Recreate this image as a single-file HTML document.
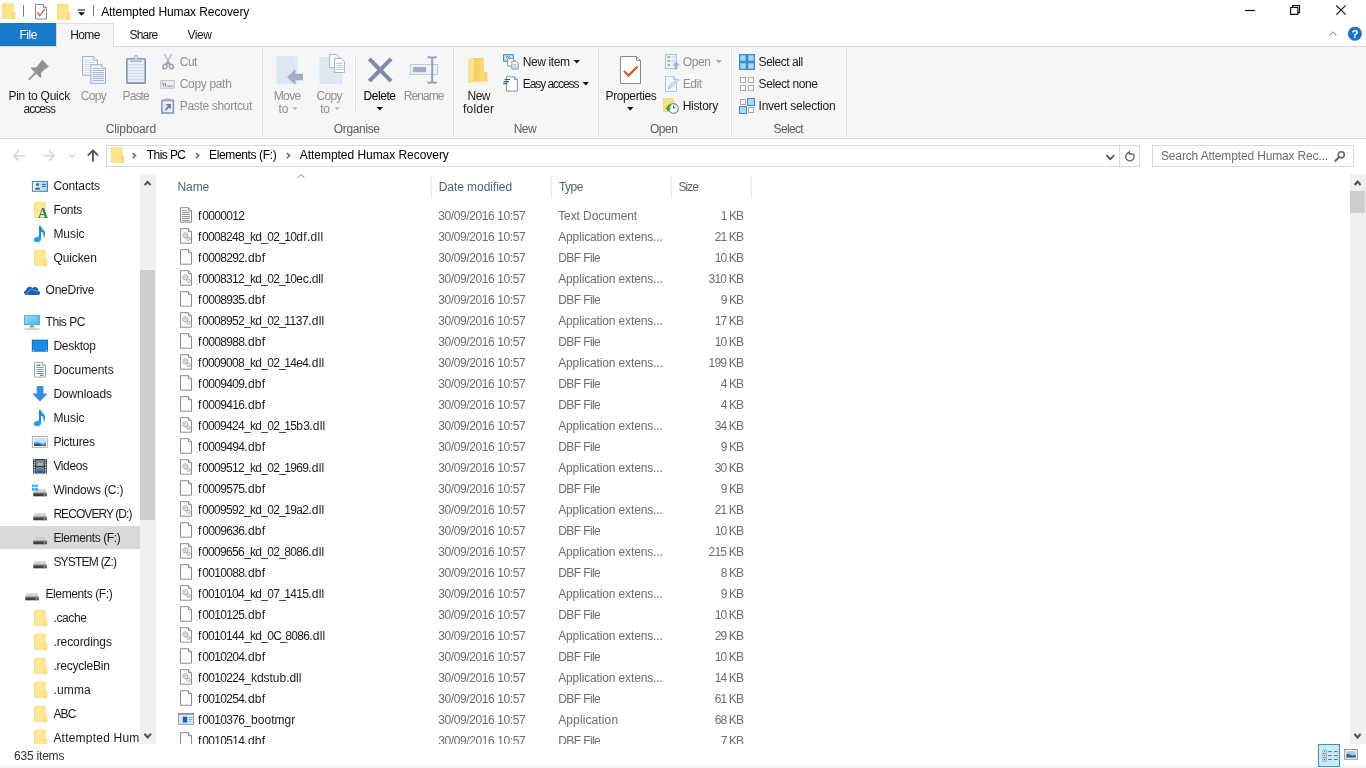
<!DOCTYPE html>
<html><head><meta charset="utf-8"><title>Attempted Humax Recovery</title>
<style>
html,body{margin:0;padding:0;width:1366px;height:768px;overflow:hidden;background:#fff}
body{font-family:"Liberation Sans",sans-serif;font-size:12px;color:#1a1a1a;position:relative}
.a{position:absolute}
.t{position:absolute;white-space:nowrap;line-height:14px}
.dis{color:#8e8e8e}
.grp{color:#5c5c5c}
.c{text-align:center}
#ribbon{position:absolute;left:0;top:47px;width:1366px;height:91px;background:#f5f6f7;border-bottom:1px solid #dadbdc}
.sep{position:absolute;width:1px;background:#dfe0e1;top:48px;height:88px;box-shadow:-1px 0 0 #fbfbfc}
.row{position:absolute;left:170px;width:590px;height:21px}
.row span{position:absolute;top:4px;line-height:14px;white-space:nowrap}
.row span.r{position:static}
.fi{position:absolute;left:8px;top:2px}
.fn{left:28px;color:#1a1a1a}
.fd{left:268.200px;color:#6d6d6d}
.ft{left:388.200px;color:#6d6d6d}
.fs{right:17.600px;color:#6d6d6d}
.nv{position:absolute;left:0;width:140px;height:24px}
.nv.sel{background:#d9d9d9;height:23px;margin-top:1px}
.nv.sel .ni{top:2px}
.nv.sel .nl{top:5px}
.ni{position:absolute;top:3px}
.nl{position:absolute;top:6px;line-height:14px;white-space:nowrap;color:#1a1a1a}
.hd{position:absolute;white-space:nowrap;top:180px;line-height:14px;color:#5a6270}
.hsep{position:absolute;top:175px;width:1px;height:23px;background:#e8e8e8}
</style></head><body><div id="app" style="position:absolute;left:0;top:0;width:1366px;height:768px;will-change:transform">
<svg width="0" height="0" style="position:absolute">
<defs>
<symbol id="i-blank" viewBox="0 0 16 16"><path d="M2.500 0.700h8l3 3v11.500h-11z" fill="#fff" stroke="#8a8a8a"/><path d="M10.500 0.700v3h3" fill="#f4f4f4" stroke="#8a8a8a"/></symbol>
<symbol id="i-txt" viewBox="0 0 16 16"><path d="M2.500 0.700h8l3 3v11.500h-11z" fill="#fff" stroke="#8a8a8a"/><path d="M10.500 0.700v3h3" fill="#f4f4f4" stroke="#8a8a8a"/><path d="M4 3.500h4.800M4 5.500h7.800M4 7.500h7.800M4 9.500h7.800M4 11.500h7.800M4 13.500h7.800" stroke="#8f8f8f" stroke-width="1"/></symbol>
<symbol id="i-dll" viewBox="0 0 16 16"><path d="M2.500 0.700h8l3 3v11.500h-11z" fill="#fff" stroke="#8a8a8a"/><path d="M10.500 0.700v3h3" fill="#f4f4f4" stroke="#8a8a8a"/><circle cx="7.300" cy="7.300" r="2.600" fill="#f0f0f0" stroke="#a4a4a4" stroke-width=".9"/><circle cx="7.300" cy="7.300" r="1" fill="none" stroke="#b5b5b5" stroke-width=".7"/><circle cx="10.600" cy="10.800" r="1.700" fill="#f0f0f0" stroke="#a4a4a4" stroke-width=".9"/></symbol>
<symbol id="i-exe" viewBox="0 0 16 16"><rect x="0.600" y="2.600" width="15" height="10.700" fill="#d9eefc" stroke="#8f9aa6"/><rect x="0.100" y="2.100" width="16" height="1.600" fill="#8e8e8e"/><rect x="4.800" y="5.600" width="4.400" height="6" fill="#1f5fa8"/><path d="M10.500 6.500h4M10.500 8.500h4M10.500 10.500h3" stroke="#7fa6cc" stroke-width=".9"/></symbol>
<symbol id="n-folder" viewBox="0 0 20 20"><path d="M3.100 2.100h11.400v15.700h-11.400z" fill="#ffe794"/><path d="M3.400 2.400h10.800v15.100h-10.800z" fill="none" stroke="#f6d77c" stroke-width=".6"/><path d="M13.700 11.500h2.200v6.300h-2.200z" fill="#ffe38a" stroke="#f0cb66" stroke-width=".6"/></symbol>
<symbol id="n-contacts" viewBox="0 0 20 20"><defs><linearGradient id="gc" x1="0" x2="1"><stop offset="0" stop-color="#f2f9ff"/><stop offset="1" stop-color="#a9cdf6"/></linearGradient></defs><rect x="1.400" y="5.400" width="15.100" height="9.900" fill="url(#gc)" stroke="#4d7f9f" stroke-width="1"/><circle cx="6.500" cy="8.600" r="1.500" fill="#46646e"/><path d="M3.800 13.800c0-3.400 5.400-3.400 5.400 0z" fill="#4d6f78"/><path d="M10.800 8.300h4M10.800 10.400h4" stroke="#3f78b8" stroke-width="1.200"/></symbol>
<symbol id="n-fonts" viewBox="0 0 20 20"><path d="M3.100 2.100h11.400v15.700h-11.400z" fill="#ffe794"/><path d="M3.400 2.400h10.800v15.100h-10.800z" fill="none" stroke="#f6d77c" stroke-width=".6"/><text x="7" y="17.800" font-family="Liberation Serif,serif" font-size="14" font-weight="bold" fill="#2f8468">A</text></symbol>
<symbol id="n-music" viewBox="0 0 20 20"><path d="M7.900 2h2.100v13.500h-2.100z" fill="#1f8fc4"/><path d="M9.800 2.300q1 2.200 2.800 3.800q2 2 1.500 5q-0.400 2.200-2.200 2.600q1.500-2.500 0.300-4.300q-0.800-1.300-2.400-2z" fill="#2a8fd0"/><ellipse cx="6.400" cy="15.600" rx="3.600" ry="2.600" fill="#21a3e6" transform="rotate(-15 6.400 15.600)"/></symbol>
<symbol id="n-onedrive" viewBox="0 0 20 20"><path d="M6 14.900c-3.800 0-4-4.300-0.800-4.700c0.200-3.400 4.300-4.600 6.200-2.200c2.200-2.200 6.400-0.400 5.900 2.900c2.700 0.400 2.200 4-0.300 4z" fill="#1b5fb0"/><path d="M7.200 14.700c-1.800-0.500-1.800-3.300 0.900-3.400c0.700-2.300 3.700-2.600 4.800-0.800c1.800-0.800 3.400 0.400 3.300 1.700" fill="none" stroke="#a9caee" stroke-width=".7"/></symbol>
<symbol id="n-pc" viewBox="0 0 20 20"><defs><linearGradient id="gp" x1="0" y1="0" x2="1" y2="1"><stop offset="0" stop-color="#a4dcfb"/><stop offset="1" stop-color="#3fb0ee"/></linearGradient></defs><rect x="3.400" y="3.400" width="15.200" height="9.400" fill="url(#gp)" stroke="#49a3dc" stroke-width=".8"/><path d="M8.500 14.800h5" stroke="#7a8b99" stroke-width="1.200"/><path d="M10 13v2h2v-2z" fill="#8d9ba8"/><path d="M3.500 17.100h15" stroke="#9aa5af" stroke-width="1"/></symbol>
<symbol id="n-desktop" viewBox="0 0 20 20"><rect x="0.900" y="3.800" width="16.100" height="11.700" fill="#1f8ae6"/><rect x="1.300" y="4.200" width="15.300" height="10.900" fill="none" stroke="#1570c4" stroke-width=".8"/><rect x="2" y="14" width="1" height="1" fill="#fff"/><rect x="14.900" y="14" width="1" height="1" fill="#fff"/></symbol>
<symbol id="n-docs" viewBox="0 0 20 20"><path d="M3.500 2.500h8l3 3v11.600h-11z" fill="#fff" stroke="#a5a9ae"/><path d="M11.500 2.500v3h3" fill="#f0f0f0" stroke="#a5a9ae"/><path d="M5.500 5.200h4" stroke="#2f6fb5" stroke-width="1.200"/><path d="M5.500 7.500h7M5.500 9.500h7M5.500 11.500h7M5.500 13.500h7" stroke="#4f8fcf" stroke-width=".9"/><path d="M9 15.200h3.500" stroke="#555" stroke-width="1"/></symbol>
<symbol id="n-down" viewBox="0 0 20 20"><path d="M5.700 2h6.700v7.500h4.400l-7.800 8.100l-7.800-8.100h4.500z" fill="#3b8ee0"/></symbol>
<symbol id="n-pics" viewBox="0 0 20 20"><rect x="1.400" y="4.500" width="14.900" height="10.900" fill="#fff" stroke="#b0b4b8"/><rect x="3" y="6" width="11.800" height="7.900" fill="#bfe2f8"/><path d="M3 11q3-2 6 0t5.800-1v3.900h-11.800z" fill="#5f8fb3"/><path d="M3 12.500q4-1 7 0.500t4.800-0.500v1.400h-11.800z" fill="#274e70"/></symbol>
<symbol id="n-videos" viewBox="0 0 20 20"><rect x="2" y="3" width="14" height="14.500" fill="#3a3f4a"/><rect x="4.800" y="4" width="8.400" height="6" fill="#6f86a8"/><rect x="4.800" y="11" width="8.400" height="5.600" fill="#5d87b5"/><path d="M6 8l2-2l2 1.500l2-1.500v3.500h-6z" fill="#c9b36a"/><path d="M5 15.500q3-2 8-0.500v1.600h-8z" fill="#2d5f93"/><path d="M3.400 3.500v14M14.600 3.500v14" stroke="#e8e8e8" stroke-width="1.300" stroke-dasharray="1.300 1.100"/></symbol>
<symbol id="n-drive" viewBox="0 0 20 20"><path d="M3.800 9.200h10.500l1.500 4h-13.500z" fill="#cfcfcf"/><path d="M2.300 12.800h13.500v3.500h-13.500z" fill="#3d3d3d"/><path d="M2.300 12.800h13.500v0.800h-13.500z" fill="#8c8c8c"/><rect x="12.500" y="14.400" width="1.800" height="0.900" fill="#e8e8e8"/></symbol>
<symbol id="n-cdrive" viewBox="0 0 20 20"><path d="M3.800 9.200h10.500l1.500 4h-13.500z" fill="#cfcfcf"/><path d="M2.300 12.800h13.500v3.500h-13.500z" fill="#3d3d3d"/><path d="M2.300 12.800h13.500v0.800h-13.500z" fill="#8c8c8c"/><rect x="12.500" y="14.400" width="1.800" height="0.900" fill="#e8e8e8"/><path d="M0.900 4.500h2.600v2.800h-2.600zM4.100 4.500h2.700v2.800h-2.700zM0.900 7.900h2.600v2.900h-2.600zM4.100 7.900h2.700v2.900h-2.700z" fill="#29b6f0"/></symbol>
</defs>
</svg>

<!-- TITLE BAR -->
<div class="a" id="titlebar" style="left:0;top:0;width:1366px;height:23px;background:#fff"></div>
<svg class="a" style="left:0;top:0" width="100" height="23">
 <path d="M2 3.100h11.500v15.500h-11.500z" fill="#ffe48e"/><path d="M2.300 3.400h10.900v14.900h-10.900z" fill="none" stroke="#f7d982" stroke-width=".6"/><path d="M12.600 12.300h2.300v6.300h-2.300z" fill="#ffe38a" stroke="#efc95f" stroke-width=".6"/>
 <path d="M23.500 5v11.500" stroke="#7a7a7a"/>
 <path d="M35.500 4.500h8l3 3v11.500h-11z" fill="#fff" stroke="#8a8a8a"/><path d="M43.500 4.500v3h3" fill="#f2f2f2" stroke="#8a8a8a"/><path d="M37.500 12.500l2.300 3.200l5-6.500" fill="none" stroke="#d9545c" stroke-width="1.300"/>
 <path d="M57 4h11.500v15.500h-11.500z" fill="#ffe48e"/><path d="M57.300 4.300h10.900v14.900h-10.900z" fill="none" stroke="#f7d982" stroke-width=".6"/><path d="M67.600 13.200h2.300v6.300h-2.300z" fill="#ffe38a" stroke="#efc95f" stroke-width=".6"/>
 <path d="M77.800 10h7.200" stroke="#111" stroke-width="1.100"/><path d="M78 12.300h7l-3.500 3.500z" fill="#111"/>
 <path d="M93.500 5v11.500" stroke="#7a7a7a"/>
</svg>
<div class="t" style="left:101.200px;top:5px;color:#000;letter-spacing:-0.082px">Attempted Humax Recovery</div>
<svg class="a" style="left:1230px;top:0" width="136" height="23">
 <path d="M15 10.500h10" stroke="#111" stroke-width="1.200"/>
 <path d="M60.600 7.500h7.200v6.900h-7.200z" fill="none" stroke="#111" stroke-width="1.150"/><path d="M62.600 7.500v-1.900h6.900v7h-1.700" fill="none" stroke="#111" stroke-width="1.150"/>
 <path d="M106.300 5.300l9.400 9.400M115.700 5.300l-9.400 9.400" stroke="#111" stroke-width="1.200"/>
</svg>

<!-- TABS -->
<div class="a" style="left:0;top:23px;width:56px;height:23px;background:#1979ca"></div>
<div class="t" style="left:19.500px;top:28px;color:#fff;letter-spacing:-0.486px">File</div>
<div class="a" style="left:0;top:46px;width:1366px;height:1px;background:#dadbdc"></div>
<div class="a" style="left:56px;top:23px;width:56px;height:24px;background:#f5f6f7;border:1px solid #dadbdc;border-bottom:none;box-sizing:content-box"></div>
<div class="t" style="left:70.300px;top:28px;letter-spacing:-0.654px">Home</div>
<div class="t" style="left:129.500px;top:28px;letter-spacing:-0.806px">Share</div>
<div class="t" style="left:187.500px;top:28px;letter-spacing:-0.449px">View</div>
<svg class="a" style="left:1320px;top:23px" width="46" height="23">
 <path d="M9.400 12.600l3.550-3.600l3.550 3.600" fill="none" stroke="#a3a3a3" stroke-width="1.200"/>
 <circle cx="34.900" cy="10.800" r="7" fill="#1a72c4"/>
 <text x="34.900" y="15" font-family="Liberation Sans,sans-serif" font-weight="bold" font-size="11.500" fill="#fff" text-anchor="middle">?</text>
</svg>

<!-- RIBBON -->
<div id="ribbon"></div>
<div class="sep" style="left:262px"></div>
<div class="sep" style="left:453px"></div>
<div class="sep" style="left:598px"></div>
<div class="sep" style="left:731px"></div>
<div class="sep" style="left:846px"></div>
<div class="sep" style="left:355px;top:56px;height:55px"></div>
<svg class="a" style="left:0;top:47px" width="860" height="90" viewBox="0 47 860 90">
<!-- pin -->
<g transform="translate(29,79.600) rotate(-45)" fill="#8e9192">
 <path d="M-0.300 -0.700L9.600 -1.100L9.600 1.100L-0.300 0.700Q-0.800 0 -0.300 -0.700z"/>
 <path d="M9.200 -6.700L10.600 -6.800C12.300 -4.200 13.500 -3.700 15 -3.600L23.400 -4.700L23.400 4.700L15 3.600C13.500 3.700 12.300 4.200 10.600 6.800L9.200 6.700z"/>
</g>
<!-- copy -->
<g stroke="#a5aaba" fill="#f4f7fc">
 <path d="M82.600 56.600h11.100l3.600 3.600v15h-14.700z"/><path d="M93.700 56.600v3.600h3.600" fill="#fff"/>
 <path d="M84.500 60.500h6.500M84.500 62.500h10.500M84.500 64.500h10.500M84.500 66.500h10.500M84.500 68.500h10.500M84.500 70.500h10.500M84.500 72.500h10.500" stroke="#d3dae8" fill="none"/>
 <path d="M90.800 64.800h11.100l3.600 3.600v14.900h-14.700z" fill="#f1f5fc"/><path d="M101.900 64.800v3.600h3.600" fill="#fff"/>
 <path d="M92.500 68.500h7.500M92.500 70.500h11.500M92.500 72.500h11.500M92.500 74.500h11.500M92.500 76.500h11.500M92.500 78.500h11.500M92.500 80.500h11.500" stroke="#a3b4cc" fill="none" stroke-width="1"/>
</g>
<!-- paste -->
<g>
 <rect x="126.900" y="58.700" width="18.300" height="24.400" rx="0.800" fill="#e7edfa" stroke="#8b8fac" stroke-width="1.600"/>
 <path d="M128 64.500h16M128 67.500h16M128 70.500h16M128 73.500h16M128 76.500h16M128 79.500h16" stroke="#d0d9ee"/>
 <path d="M130.200 59.300h11.600v2.400h-11.600z" fill="#c3c7db"/><path d="M130.200 61.500h11.600" stroke="#a4a9c2" stroke-width=".8"/>
 <path d="M134.600 59v-2.300q0-1.400 1.400-1.400t1.400 1.400v2.300" fill="#dfe2ee" stroke="#a9adc4" stroke-width=".9"/>
</g>
<!-- cut -->
<g fill="none">
 <path d="M164.300 54.200l5.600 9.800M171.700 54.200l-5.600 9.800" stroke="#b9b9c1" stroke-width="1.500"/>
 <ellipse cx="165" cy="66.700" rx="1.900" ry="2.400" stroke="#9c9ca6" stroke-width="1.500" transform="rotate(25 165 66.700)"/>
 <ellipse cx="171.300" cy="66.700" rx="1.900" ry="2.400" stroke="#9c9ca6" stroke-width="1.500" transform="rotate(-25 171.300 66.700)"/>
 <path d="M166.200 64.500l1.800-2.500l1.800 2.500" stroke="#9c9ca6" stroke-width="1.400"/>
</g>
<!-- copy path -->
<g>
 <rect x="160.800" y="80.600" width="13.500" height="7.600" fill="#eceef4" stroke="#bcbfca"/>
 <path d="M162.500 82.500l1.500 4M164.700 82.500l1.500 4" fill="none" stroke="#70748a" stroke-width="1"/><path d="M167.600 86.200h1.100M169.500 86.200h1.100M171.400 86.200h1.100" stroke="#70748a" stroke-width="1.200"/>
</g>
<!-- paste shortcut -->
<g>
 <rect x="161.900" y="100.400" width="11.500" height="12.600" fill="#e6eaf5" stroke="#8e93b3" stroke-width="1.600"/>
 <path d="M164.800 98.600h5.800v1.800h-5.800z" fill="#a9adc4"/>
 <path d="M165.300 110.200l4.200-4.600M166.300 104.800h3.800v3.800" fill="none" stroke="#6f7596" stroke-width="1.600"/>
</g>
<!-- move to -->
<g>
 <rect x="276.600" y="56" width="21.400" height="27.800" fill="#dfe6f1"/><rect x="295" y="56" width="3" height="27.800" fill="#e6ecf5"/>
 <path d="M303 73.700h-7.500v-4.700l-8.500 8l8.500 8v-4.700h7.500z" fill="#a5adc4"/>
</g>
<path d="M292.500 107.300h5l-2.500 2.700z" fill="#b9b9b9"/>
<path d="M334.500 107.300h5l-2.500 2.700z" fill="#b9b9b9"/>
<!-- copy to -->
<g>
 <rect x="319.500" y="57" width="23" height="27" fill="#dfe6f1"/><rect x="337" y="57" width="1" height="27" fill="#eef2f8"/>
 <g stroke="#aab1c4" fill="#f6f8fc" stroke-width=".9">
 <path d="M329.500 54.500h7l3 3v10h-10z"/>
 <path d="M334.500 58.500h7l3 3v11h-10z" fill="#fafbfe"/>
 <path d="M336.500 63.500h6M336.500 65.500h6M336.500 67.500h6M336.500 69.500h6" stroke="#b9c3d8" fill="none"/>
 </g>
</g>
<!-- delete -->
<path d="M369.300 58.900l21.800 22.200M391.100 58.900l-21.800 22.200" stroke="#8488a9" stroke-width="4.100" fill="none"/>
<path d="M376.500 107h6.500l-3.250 3.500z" fill="#111"/>
<!-- rename -->
<g>
 <rect x="410.300" y="64.500" width="27.200" height="10" fill="#eef1f8" stroke="#c3c8da"/>
 <rect x="413" y="67" width="13" height="5.200" fill="#a3a9c3"/>
 <path d="M432.200 58v24M427.500 57.300h3q1.700 0.300 1.700 1.500q0-1.200 1.700-1.500h3M427.500 82.700h3q1.700-0.300 1.700-1.500q0 1.200 1.700 1.500h3" fill="none" stroke="#9a9eb8" stroke-width="2"/>
</g>
<!-- new folder -->
<g>
 <defs><linearGradient id="gnf" x1="0" x2="1"><stop offset="0" stop-color="#f3c95a"/><stop offset="1" stop-color="#fbdb74"/></linearGradient></defs>
 <path d="M468.500 82.500q3 1 6 0.300h12.800v-2h-18.800z" fill="#fdeebb"/>
 <path d="M473 58h11v23.300h-11z" fill="url(#gnf)"/>
 <path d="M484 72.200h3.500v9.100h-3.500z" fill="#f7d268"/>
 <path d="M468.100 60q0-2 2-2h4l-0.600 24.600q-2.500 0.800-5.400-0.200z" fill="#fce290"/>
</g>
<!-- new item -->
<g>
 <rect x="503.600" y="54.700" width="9.700" height="6.500" fill="#cfe6f9" stroke="#4d86bd" stroke-width="1.100"/>
 <path d="M506 57.500l1.300-1l1.300 0.800l1.500-1" stroke="#3f5f86" fill="none" stroke-width=".9"/>
 <path d="M507.700 58.300h4.500l2 2v5.800h-6.500z" fill="#fff" stroke="#8a92a5"/>
 <path d="M511.900 61.100h4.300l2 2v5.900h-6.300z" fill="#fff" stroke="#8a92a5"/>
 <path d="M513 64.500h4.500M513 66.300h4.500M513 68h4.500M515.200 63.500v5" stroke="#b5bccb" stroke-width=".8"/>
</g>
<!-- easy access -->
<g>
 <path d="M506.400 76.700h8l2.900 2.900v11.500h-10.900z" fill="#fff" stroke="#8a8f9c"/>
 <path d="M514.400 76.700v2.900h2.900" fill="none" stroke="#8a8f9c"/>
 <path d="M504.600 79.500h5.400M503.600 81.600h5.400M503.100 83.700h4.600" stroke="#2b5f73" stroke-width="1.100"/>
</g>
<path d="M573.500 60h6.500l-3.250 3.500z" fill="#111"/>
<path d="M582.500 82h6.500l-3.250 3.500z" fill="#111"/>
<!-- properties -->
<g>
 <path d="M620.500 56.500h16l4 4v23h-20z" fill="#fff" stroke="#8a8a8a"/>
 <path d="M636.500 56.500v4h4" fill="none" stroke="#8a8a8a"/>
 <path d="M624 71l4.500 4.500l9-9" fill="none" stroke="#d2622a" stroke-width="2.400"/>
</g>
<path d="M627 107h6.500l-3.250 3.500z" fill="#111"/>
<!-- open -->
<g>
 <rect x="665.500" y="54.500" width="11" height="14" fill="#eef1f7" stroke="#b9bfce"/>
 <path d="M667.500 57h2.500M667.500 61h2.500M667.500 65h2.500" stroke="#a6adc2" stroke-width="2"/>
 <path d="M671.500 57h3.500M671.500 61h3.500" stroke="#c5cad8"/>
 <path d="M674.500 69.500v-4h-2.500l4-4l4 4h-2.500v4z" fill="#a9afc4"/>
</g>
<path d="M715.500 60h6.500l-3.250 3.500z" fill="#b0b0b0"/>
<!-- edit -->
<g>
 <path d="M665.500 76.500h8l3 3v12h-11z" fill="#f4f6fb" stroke="#bcc2d1"/>
 <path d="M673.500 76.500v3h3" fill="none" stroke="#bcc2d1"/>
 <path d="M668 89l1-3l8.500-7.500l1.500 1.500l-8.500 8z" fill="#dfe3ee" stroke="#b4bacb" stroke-width=".9"/>
</g>
<!-- history -->
<g>
 <path d="M663.500 98.500h10v13h-10z" fill="#f7df7e" stroke="#ecd06a" stroke-width=".7"/>
 <circle cx="673.500" cy="108.500" r="4.800" fill="#fff" stroke="#7d868f" stroke-width="1.200"/>
 <path d="M673.500 105.500v3l2-1.500" fill="none" stroke="#555" stroke-width=".9"/>
 <path d="M670.500 104q-3 0.500-3.500 3.500l-1.800-0.500l2.500 4.500l3.500-3l-1.800-0.500q0.500-1.500 2-2z" fill="#3aa74a"/>
</g>
<!-- select all -->
<g stroke="#3a8ccc" stroke-width="1.300" fill="#a9d7f5">
 <rect x="739.650" y="54.650" width="6.700" height="6.700"/><rect x="747.650" y="54.650" width="6.700" height="6.700"/>
 <rect x="739.650" y="62.650" width="6.700" height="6.700"/><rect x="747.650" y="62.650" width="6.700" height="6.700"/>
</g>
<!-- select none -->
<g stroke="#a9a9a9" stroke-width="1" fill="#fff">
 <rect x="740.500" y="77.500" width="5" height="5"/><rect x="748.500" y="77.500" width="5" height="5"/>
 <rect x="740.500" y="85.500" width="5" height="5"/><rect x="748.500" y="85.500" width="5" height="5"/>
</g>
<!-- invert -->
<g stroke-width="1">
 <rect x="740.500" y="99.500" width="5" height="5" fill="#fff" stroke="#a9a9a9"/>
 <rect x="747.500" y="98.500" width="7" height="7" fill="#a9d7f5" stroke="#3a8ccc"/>
 <rect x="739.500" y="106.500" width="7" height="7" fill="#a9d7f5" stroke="#3a8ccc"/>
 <rect x="748.500" y="107.500" width="5" height="5" fill="#fff" stroke="#a9a9a9"/>
</g>
</svg>

<div class="t" style="left:8.400px;top:89px;letter-spacing:-0.259px">Pin to Quick</div><div class="t" style="left:23.500px;top:102px;letter-spacing:-0.977px">access</div>
<div class="t dis" style="left:80.800px;top:89px;letter-spacing:-0.704px">Copy</div>
<div class="t dis" style="left:122.500px;top:89px;letter-spacing:-0.858px">Paste</div>
<div class="t dis" style="left:179.700px;top:55px;letter-spacing:-0.462px">Cut</div>
<div class="t dis" style="left:179.700px;top:77px;letter-spacing:-0.323px">Copy path</div>
<div class="t dis" style="left:179.700px;top:99px;letter-spacing:-0.316px">Paste shortcut</div>
<div class="t grp" style="left:105.700px;top:122px;letter-spacing:-0.108px">Clipboard</div>
<div class="t dis" style="left:273.700px;top:89px;letter-spacing:-0.611px">Move</div><div class="t dis" style="left:278.400px;top:102px;letter-spacing:-0.058px">to</div>
<div class="t dis" style="left:316.400px;top:89px;letter-spacing:-0.604px">Copy</div><div class="t dis" style="left:320.200px;top:102px;letter-spacing:-0.158px">to</div>
<div class="t" style="left:363.500px;top:89px;color:#000;letter-spacing:-0.448px">Delete</div>
<div class="t dis" style="left:403.800px;top:89px;letter-spacing:-0.927px">Rename</div>
<div class="t grp" style="left:333.800px;top:122px;letter-spacing:-0.35px">Organise</div>
<div class="t" style="left:467.600px;top:89px;letter-spacing:-0.539px">New</div><div class="t" style="left:463px;top:102px;letter-spacing:0.211px">folder</div>
<div class="t" style="left:522.700px;top:55px;letter-spacing:-0.389px">New item</div>
<div class="t" style="left:522.700px;top:77px;letter-spacing:-1.06px">Easy access</div>
<div class="t grp" style="left:513.700px;top:122px;letter-spacing:-0.572px">New</div>
<div class="t" style="left:605.500px;top:89px;letter-spacing:-0.37px">Properties</div>
<div class="t dis" style="left:682.700px;top:55px;letter-spacing:-0.39px">Open</div>
<div class="t dis" style="left:682.700px;top:77px;letter-spacing:-0.422px">Edit</div>
<div class="t" style="left:682.700px;top:99px;letter-spacing:-0.306px">History</div>
<div class="t grp" style="left:649.900px;top:122px;letter-spacing:-0.415px">Open</div>
<div class="t" style="left:758.600px;top:55px;letter-spacing:-0.47px">Select all</div>
<div class="t" style="left:758.600px;top:77px;letter-spacing:-0.399px">Select none</div>
<div class="t" style="left:758.600px;top:99px;letter-spacing:-0.245px">Invert selection</div>
<div class="t grp" style="left:773.600px;top:122px;letter-spacing:-0.66px">Select</div>

<!-- ADDRESS BAR -->
<svg class="a" style="left:0;top:138px" width="106" height="36">
 <path d="M13.800 17.700h11M18.800 12.800l-4.900 4.900l4.900 4.900" fill="none" stroke="#d4d4d4" stroke-width="1.600"/>
 <path d="M43 17.700h11M49.200 12.800l4.900 4.900l-4.900 4.900" fill="none" stroke="#d4d4d4" stroke-width="1.600"/>
 <path d="M69.300 16.200l2.900 2.900l2.900-2.900" fill="none" stroke="#d4d4d4" stroke-width="1.300"/>
 <path d="M93 23.600v-11M87.800 17.600l5.200-5.200l5.200 5.200" fill="none" stroke="#575757" stroke-width="1.900"/>
</svg>
<div class="a" style="left:106px;top:145px;width:1032px;height:20px;border:1px solid #d9d9d9"></div>
<div class="a" style="left:1119px;top:145px;width:1px;height:22px;background:#d9d9d9"></div>
<svg class="a" style="left:106px;top:145px" width="200" height="22">
 <path d="M5 2.300h11.500v15.400h-11.500z" fill="#ffe48e"/><path d="M5.300 2.600h10.900v14.800h-10.900z" fill="none" stroke="#f7d982" stroke-width=".6"/><path d="M15.600 11.400h2.300v6.300h-2.300z" fill="#ffe38a" stroke="#efc95f" stroke-width=".6"/>
 <path d="M26.700 8l2.900 2.600l-2.900 2.600" fill="none" stroke="#6a6a6a" stroke-width="1.500"/>
 <path d="M89.900 8l2.900 2.600l-2.900 2.600" fill="none" stroke="#6a6a6a" stroke-width="1.500"/>
 <path d="M180.800 8l2.900 2.600l-2.900 2.600" fill="none" stroke="#6a6a6a" stroke-width="1.500"/>
</svg>
<div class="t" style="left:146.800px;top:148px;color:#000;letter-spacing:-0.584px">This PC</div>
<div class="t" style="left:209px;top:148px;color:#000;letter-spacing:-0.363px">Elements (F:)</div>
<div class="t" style="left:299.800px;top:148px;color:#000;letter-spacing:-0.044px">Attempted Humax Recovery</div>
<svg class="a" style="left:1098px;top:145px" width="44" height="22">
 <path d="M8.400 10.100l3.900 4.100l3.900-4.100" fill="none" stroke="#555" stroke-width="1.700"/>
 <path d="M34.900 8.700A4.200 4.200 0 1 1 31.200 7.500" fill="none" stroke="#666" stroke-width="1.400"/><path d="M31.400 5.800v3.200h3.200" fill="none" stroke="#666" stroke-width="1.300"/>
</svg>
<div class="a" style="left:1152px;top:145px;width:200px;height:20px;border:1px solid #d9d9d9"></div>
<div class="t" style="left:1161px;top:149px;color:#6d6d6d;letter-spacing:-0.152px">Search Attempted Humax Rec...</div>
<svg class="a" style="left:1332px;top:147px" width="18" height="18">
 <circle cx="9.300" cy="7.800" r="3" fill="none" stroke="#666" stroke-width="1.500"/><path d="M7.200 10l-4.500 4.500" stroke="#666" stroke-width="1.900"/>
</svg>

<!-- NAV PANE -->
<div class="nv" style="top:173px"><svg class="ni" style="left:31px" width="20" height="20"><use href="#n-contacts"/></svg><span class="nl" style="left:53.4px;letter-spacing:-0.095px">Contacts</span></div>
<div class="nv" style="top:197px"><svg class="ni" style="left:31px" width="20" height="20"><use href="#n-fonts"/></svg><span class="nl" style="left:53.4px;letter-spacing:-0.283px">Fonts</span></div>
<div class="nv" style="top:221px"><svg class="ni" style="left:31px" width="20" height="20"><use href="#n-music"/></svg><span class="nl" style="left:53.4px;letter-spacing:-0.029px">Music</span></div>
<div class="nv" style="top:245px"><svg class="ni" style="left:31px" width="20" height="20"><use href="#n-folder"/></svg><span class="nl" style="left:53.4px;letter-spacing:-0.09px">Quicken</span></div>
<div class="nv" style="top:277px"><svg class="ni" style="left:21px" width="20" height="20"><use href="#n-onedrive"/></svg><span class="nl" style="left:45.6px;letter-spacing:-0.261px">OneDrive</span></div>
<div class="nv" style="top:309px"><svg class="ni" style="left:21px" width="20" height="20"><use href="#n-pc"/></svg><span class="nl" style="left:45.6px;letter-spacing:-0.47px">This PC</span></div>
<div class="nv" style="top:333px"><svg class="ni" style="left:31px" width="20" height="20"><use href="#n-desktop"/></svg><span class="nl" style="left:53.4px;letter-spacing:-0.247px">Desktop</span></div>
<div class="nv" style="top:357px"><svg class="ni" style="left:31px" width="20" height="20"><use href="#n-docs"/></svg><span class="nl" style="left:53.4px;letter-spacing:-0.056px">Documents</span></div>
<div class="nv" style="top:381px"><svg class="ni" style="left:31px" width="20" height="20"><use href="#n-down"/></svg><span class="nl" style="left:53.4px;letter-spacing:-0.097px">Downloads</span></div>
<div class="nv" style="top:405px"><svg class="ni" style="left:31px" width="20" height="20"><use href="#n-music"/></svg><span class="nl" style="left:53.4px;letter-spacing:-0.029px">Music</span></div>
<div class="nv" style="top:429px"><svg class="ni" style="left:31px" width="20" height="20"><use href="#n-pics"/></svg><span class="nl" style="left:53.4px;letter-spacing:-0.257px">Pictures</span></div>
<div class="nv" style="top:453px"><svg class="ni" style="left:31px" width="20" height="20"><use href="#n-videos"/></svg><span class="nl" style="left:53.4px;letter-spacing:-0.364px">Videos</span></div>
<div class="nv" style="top:477px"><svg class="ni" style="left:31px" width="20" height="20"><use href="#n-cdrive"/></svg><span class="nl" style="left:53.4px;letter-spacing:-0.176px">Windows (C:)</span></div>
<div class="nv" style="top:501px"><svg class="ni" style="left:31px" width="20" height="20"><use href="#n-drive"/></svg><span class="nl" style="left:53.4px;letter-spacing:-0.935px">RECOVERY (D:)</span></div>
<div class="nv sel" style="top:525px"><svg class="ni" style="left:31px" width="20" height="20"><use href="#n-drive"/></svg><span class="nl" style="left:53.4px;letter-spacing:-0.394px">Elements (F:)</span></div>
<div class="nv" style="top:549px"><svg class="ni" style="left:31px" width="20" height="20"><use href="#n-drive"/></svg><span class="nl" style="left:53.4px;letter-spacing:-0.777px">SYSTEM (Z:)</span></div>
<div class="nv" style="top:581px"><svg class="ni" style="left:23px" width="20" height="20"><use href="#n-drive"/></svg><span class="nl" style="left:45.5px;letter-spacing:-0.401px">Elements (F:)</span></div>
<div class="nv" style="top:605px"><svg class="ni" style="left:31px" width="20" height="20"><use href="#n-folder"/></svg><span class="nl" style="left:53.4px;letter-spacing:-0.343px">.cache</span></div>
<div class="nv" style="top:629px"><svg class="ni" style="left:31px" width="20" height="20"><use href="#n-folder"/></svg><span class="nl" style="left:53.4px;letter-spacing:-0.08px">.recordings</span></div>
<div class="nv" style="top:653px"><svg class="ni" style="left:31px" width="20" height="20"><use href="#n-folder"/></svg><span class="nl" style="left:53.4px;letter-spacing:-0.217px">.recycleBin</span></div>
<div class="nv" style="top:677px"><svg class="ni" style="left:31px" width="20" height="20"><use href="#n-folder"/></svg><span class="nl" style="left:53.4px;letter-spacing:0.163px">.umma</span></div>
<div class="nv" style="top:701px"><svg class="ni" style="left:31px" width="20" height="20"><use href="#n-folder"/></svg><span class="nl" style="left:53.4px;letter-spacing:-0.829px">ABC</span></div>
<div class="nv" style="top:725px"><svg class="ni" style="left:31px" width="20" height="20"><use href="#n-folder"/></svg><span class="nl" style="left:53.4px;letter-spacing:0.217px">Attempted Hum</span></div>
<div class="a" style="left:140px;top:174px;width:16px;height:570px;background:#f0f0f0"></div>
<div class="a" style="left:140px;top:270px;width:15px;height:250px;background:#cdcdcd"></div>
<svg class="a" style="left:140px;top:174px" width="16" height="17"><path d="M4.600 11.200l3-3.300l3 3.300" fill="none" stroke="#505050" stroke-width="2"/></svg>
<svg class="a" style="left:140px;top:727px" width="16" height="17"><path d="M4.400 6.800l3.300 3.600l3.300-3.600" fill="none" stroke="#505050" stroke-width="2"/></svg>

<!-- LIST HEADER -->
<div class="hd" style="left:177.500px;letter-spacing:-0.079px">Name</div>
<div class="hd" style="left:438.700px;letter-spacing:-0.05px">Date modified</div>
<div class="hd" style="left:558.900px;letter-spacing:-0.479px">Type</div>
<div class="hd" style="left:678.400px;letter-spacing:-0.936px">Size</div>
<div class="hsep" style="left:431px"></div>
<div class="hsep" style="left:551px"></div>
<div class="hsep" style="left:671px"></div>
<div class="hsep" style="left:751px"></div>
<svg class="a" style="left:295px;top:172px" width="12" height="8"><path d="M2.500 6l3.500-3.500l3.500 3.500" fill="none" stroke="#7a7a7a" stroke-width="1"/></svg>

<!-- ROWS -->
<div class="a" style="left:0;top:175px;width:1349px;height:569px;overflow:hidden;pointer-events:none">
<div class="a" style="left:0;top:-175px;width:1349px;height:768px">
<div class="row" style="top:205px"><svg class="fi" width="16" height="16"><use href="#i-txt"/></svg><span class="fn"><span class="r" style="letter-spacing:0.856px">f</span><span class="r" style="letter-spacing:-0.646px">0000012</span></span><span class="fd" style="letter-spacing:-0.389px">30/09/2016 10:57</span><span class="ft" style="letter-spacing:-0.088px">Text Document</span><span class="fs" style="letter-spacing:-0.854px;margin-right:-0.854px">1 KB</span></div>
<div class="row" style="top:226px"><svg class="fi" width="16" height="16"><use href="#i-dll"/></svg><span class="fn"><span class="r" style="letter-spacing:0.713px">f</span><span class="r" style="letter-spacing:-0.666px">0008248</span><span class="r" style="letter-spacing:-0.744px">_kd_</span><span class="r" style="letter-spacing:-0.651px">02</span><span class="r" style="letter-spacing:-1.63px">_</span><span class="r" style="letter-spacing:-0.651px">10</span><span class="r" style="letter-spacing:0.283px">df.dll</span></span><span class="fd" style="letter-spacing:-0.389px">30/09/2016 10:57</span><span class="ft" style="letter-spacing:-0.138px">Application extens...</span><span class="fs" style="letter-spacing:-0.821px;margin-right:-0.821px">21 KB</span></div>
<div class="row" style="top:247px"><svg class="fi" width="16" height="16"><use href="#i-blank"/></svg><span class="fn"><span class="r" style="letter-spacing:0.79px">f</span><span class="r" style="letter-spacing:-0.655px">0008292</span><span class="r" style="letter-spacing:0.279px">.dbf</span></span><span class="fd" style="letter-spacing:-0.389px">30/09/2016 10:57</span><span class="ft" style="letter-spacing:-0.584px">DBF File</span><span class="fs" style="letter-spacing:-0.821px;margin-right:-0.821px">10 KB</span></div>
<div class="row" style="top:268px"><svg class="fi" width="16" height="16"><use href="#i-dll"/></svg><span class="fn"><span class="r" style="letter-spacing:0.713px">f</span><span class="r" style="letter-spacing:-0.666px">0008312</span><span class="r" style="letter-spacing:-0.744px">_kd_</span><span class="r" style="letter-spacing:-0.651px">02</span><span class="r" style="letter-spacing:-1.63px">_</span><span class="r" style="letter-spacing:-0.651px">10</span><span class="r" style="letter-spacing:-0.16px">ec.dll</span></span><span class="fd" style="letter-spacing:-0.389px">30/09/2016 10:57</span><span class="ft" style="letter-spacing:-0.138px">Application extens...</span><span class="fs" style="letter-spacing:-0.796px;margin-right:-0.796px">310 KB</span></div>
<div class="row" style="top:289px"><svg class="fi" width="16" height="16"><use href="#i-blank"/></svg><span class="fn"><span class="r" style="letter-spacing:0.79px">f</span><span class="r" style="letter-spacing:-0.655px">0008935</span><span class="r" style="letter-spacing:0.279px">.dbf</span></span><span class="fd" style="letter-spacing:-0.389px">30/09/2016 10:57</span><span class="ft" style="letter-spacing:-0.584px">DBF File</span><span class="fs" style="letter-spacing:-0.854px;margin-right:-0.854px">9 KB</span></div>
<div class="row" style="top:310px"><svg class="fi" width="16" height="16"><use href="#i-dll"/></svg><span class="fn"><span class="r" style="letter-spacing:0.713px">f</span><span class="r" style="letter-spacing:-0.666px">0008952</span><span class="r" style="letter-spacing:-0.744px">_kd_</span><span class="r" style="letter-spacing:-0.651px">02</span><span class="r" style="letter-spacing:-1.63px">_</span><span class="r" style="letter-spacing:-0.439px">1137</span><span class="r" style="letter-spacing:0.178px">.dll</span></span><span class="fd" style="letter-spacing:-0.389px">30/09/2016 10:57</span><span class="ft" style="letter-spacing:-0.138px">Application extens...</span><span class="fs" style="letter-spacing:-0.821px;margin-right:-0.821px">17 KB</span></div>
<div class="row" style="top:331px"><svg class="fi" width="16" height="16"><use href="#i-blank"/></svg><span class="fn"><span class="r" style="letter-spacing:0.79px">f</span><span class="r" style="letter-spacing:-0.655px">0008988</span><span class="r" style="letter-spacing:0.279px">.dbf</span></span><span class="fd" style="letter-spacing:-0.389px">30/09/2016 10:57</span><span class="ft" style="letter-spacing:-0.584px">DBF File</span><span class="fs" style="letter-spacing:-0.821px;margin-right:-0.821px">10 KB</span></div>
<div class="row" style="top:352px"><svg class="fi" width="16" height="16"><use href="#i-dll"/></svg><span class="fn"><span class="r" style="letter-spacing:0.701px">f</span><span class="r" style="letter-spacing:-0.668px">0009008</span><span class="r" style="letter-spacing:-0.747px">_kd_</span><span class="r" style="letter-spacing:-0.657px">02</span><span class="r" style="letter-spacing:-1.643px">_</span><span class="r" style="letter-spacing:-0.657px">14</span><span class="r" style="letter-spacing:-0.643px">e</span><span class="r" style="letter-spacing:-0.643px">4</span><span class="r" style="letter-spacing:0.175px">.dll</span></span><span class="fd" style="letter-spacing:-0.389px">30/09/2016 10:57</span><span class="ft" style="letter-spacing:-0.138px">Application extens...</span><span class="fs" style="letter-spacing:-0.796px;margin-right:-0.796px">199 KB</span></div>
<div class="row" style="top:373px"><svg class="fi" width="16" height="16"><use href="#i-blank"/></svg><span class="fn"><span class="r" style="letter-spacing:0.79px">f</span><span class="r" style="letter-spacing:-0.655px">0009409</span><span class="r" style="letter-spacing:0.279px">.dbf</span></span><span class="fd" style="letter-spacing:-0.389px">30/09/2016 10:57</span><span class="ft" style="letter-spacing:-0.584px">DBF File</span><span class="fs" style="letter-spacing:-0.854px;margin-right:-0.854px">4 KB</span></div>
<div class="row" style="top:394px"><svg class="fi" width="16" height="16"><use href="#i-blank"/></svg><span class="fn"><span class="r" style="letter-spacing:0.79px">f</span><span class="r" style="letter-spacing:-0.655px">0009416</span><span class="r" style="letter-spacing:0.279px">.dbf</span></span><span class="fd" style="letter-spacing:-0.389px">30/09/2016 10:57</span><span class="ft" style="letter-spacing:-0.584px">DBF File</span><span class="fs" style="letter-spacing:-0.854px;margin-right:-0.854px">4 KB</span></div>
<div class="row" style="top:415px"><svg class="fi" width="16" height="16"><use href="#i-dll"/></svg><span class="fn"><span class="r" style="letter-spacing:0.701px">f</span><span class="r" style="letter-spacing:-0.668px">0009424</span><span class="r" style="letter-spacing:-0.747px">_kd_</span><span class="r" style="letter-spacing:-0.657px">02</span><span class="r" style="letter-spacing:-1.643px">_</span><span class="r" style="letter-spacing:-0.657px">15</span><span class="r" style="letter-spacing:0.357px">b</span><span class="r" style="letter-spacing:-0.643px">3</span><span class="r" style="letter-spacing:0.175px">.dll</span></span><span class="fd" style="letter-spacing:-0.389px">30/09/2016 10:57</span><span class="ft" style="letter-spacing:-0.138px">Application extens...</span><span class="fs" style="letter-spacing:-0.821px;margin-right:-0.821px">34 KB</span></div>
<div class="row" style="top:436px"><svg class="fi" width="16" height="16"><use href="#i-blank"/></svg><span class="fn"><span class="r" style="letter-spacing:0.79px">f</span><span class="r" style="letter-spacing:-0.655px">0009494</span><span class="r" style="letter-spacing:0.279px">.dbf</span></span><span class="fd" style="letter-spacing:-0.389px">30/09/2016 10:57</span><span class="ft" style="letter-spacing:-0.584px">DBF File</span><span class="fs" style="letter-spacing:-0.854px;margin-right:-0.854px">9 KB</span></div>
<div class="row" style="top:457px"><svg class="fi" width="16" height="16"><use href="#i-dll"/></svg><span class="fn"><span class="r" style="letter-spacing:0.713px">f</span><span class="r" style="letter-spacing:-0.666px">0009512</span><span class="r" style="letter-spacing:-0.744px">_kd_</span><span class="r" style="letter-spacing:-0.651px">02</span><span class="r" style="letter-spacing:-1.63px">_</span><span class="r" style="letter-spacing:-0.661px">1969</span><span class="r" style="letter-spacing:0.178px">.dll</span></span><span class="fd" style="letter-spacing:-0.389px">30/09/2016 10:57</span><span class="ft" style="letter-spacing:-0.138px">Application extens...</span><span class="fs" style="letter-spacing:-0.821px;margin-right:-0.821px">30 KB</span></div>
<div class="row" style="top:478px"><svg class="fi" width="16" height="16"><use href="#i-blank"/></svg><span class="fn"><span class="r" style="letter-spacing:0.79px">f</span><span class="r" style="letter-spacing:-0.655px">0009575</span><span class="r" style="letter-spacing:0.279px">.dbf</span></span><span class="fd" style="letter-spacing:-0.389px">30/09/2016 10:57</span><span class="ft" style="letter-spacing:-0.584px">DBF File</span><span class="fs" style="letter-spacing:-0.854px;margin-right:-0.854px">9 KB</span></div>
<div class="row" style="top:499px"><svg class="fi" width="16" height="16"><use href="#i-dll"/></svg><span class="fn"><span class="r" style="letter-spacing:0.701px">f</span><span class="r" style="letter-spacing:-0.668px">0009592</span><span class="r" style="letter-spacing:-0.747px">_kd_</span><span class="r" style="letter-spacing:-0.657px">02</span><span class="r" style="letter-spacing:-1.643px">_</span><span class="r" style="letter-spacing:-0.657px">19</span><span class="r" style="letter-spacing:-0.643px">a</span><span class="r" style="letter-spacing:-0.643px">2</span><span class="r" style="letter-spacing:0.175px">.dll</span></span><span class="fd" style="letter-spacing:-0.389px">30/09/2016 10:57</span><span class="ft" style="letter-spacing:-0.138px">Application extens...</span><span class="fs" style="letter-spacing:-0.821px;margin-right:-0.821px">21 KB</span></div>
<div class="row" style="top:520px"><svg class="fi" width="16" height="16"><use href="#i-blank"/></svg><span class="fn"><span class="r" style="letter-spacing:0.79px">f</span><span class="r" style="letter-spacing:-0.655px">0009636</span><span class="r" style="letter-spacing:0.279px">.dbf</span></span><span class="fd" style="letter-spacing:-0.389px">30/09/2016 10:57</span><span class="ft" style="letter-spacing:-0.584px">DBF File</span><span class="fs" style="letter-spacing:-0.821px;margin-right:-0.821px">10 KB</span></div>
<div class="row" style="top:541px"><svg class="fi" width="16" height="16"><use href="#i-dll"/></svg><span class="fn"><span class="r" style="letter-spacing:0.713px">f</span><span class="r" style="letter-spacing:-0.666px">0009656</span><span class="r" style="letter-spacing:-0.744px">_kd_</span><span class="r" style="letter-spacing:-0.651px">02</span><span class="r" style="letter-spacing:-1.63px">_</span><span class="r" style="letter-spacing:-0.661px">8086</span><span class="r" style="letter-spacing:0.178px">.dll</span></span><span class="fd" style="letter-spacing:-0.389px">30/09/2016 10:57</span><span class="ft" style="letter-spacing:-0.138px">Application extens...</span><span class="fs" style="letter-spacing:-0.796px;margin-right:-0.796px">215 KB</span></div>
<div class="row" style="top:562px"><svg class="fi" width="16" height="16"><use href="#i-blank"/></svg><span class="fn"><span class="r" style="letter-spacing:0.79px">f</span><span class="r" style="letter-spacing:-0.655px">0010088</span><span class="r" style="letter-spacing:0.279px">.dbf</span></span><span class="fd" style="letter-spacing:-0.389px">30/09/2016 10:57</span><span class="ft" style="letter-spacing:-0.584px">DBF File</span><span class="fs" style="letter-spacing:-0.854px;margin-right:-0.854px">8 KB</span></div>
<div class="row" style="top:583px"><svg class="fi" width="16" height="16"><use href="#i-dll"/></svg><span class="fn"><span class="r" style="letter-spacing:0.713px">f</span><span class="r" style="letter-spacing:-0.666px">0010104</span><span class="r" style="letter-spacing:-0.744px">_kd_</span><span class="r" style="letter-spacing:-0.651px">07</span><span class="r" style="letter-spacing:-1.63px">_</span><span class="r" style="letter-spacing:-0.661px">1415</span><span class="r" style="letter-spacing:0.178px">.dll</span></span><span class="fd" style="letter-spacing:-0.389px">30/09/2016 10:57</span><span class="ft" style="letter-spacing:-0.138px">Application extens...</span><span class="fs" style="letter-spacing:-0.854px;margin-right:-0.854px">9 KB</span></div>
<div class="row" style="top:604px"><svg class="fi" width="16" height="16"><use href="#i-blank"/></svg><span class="fn"><span class="r" style="letter-spacing:0.79px">f</span><span class="r" style="letter-spacing:-0.655px">0010125</span><span class="r" style="letter-spacing:0.279px">.dbf</span></span><span class="fd" style="letter-spacing:-0.389px">30/09/2016 10:57</span><span class="ft" style="letter-spacing:-0.584px">DBF File</span><span class="fs" style="letter-spacing:-0.821px;margin-right:-0.821px">10 KB</span></div>
<div class="row" style="top:625px"><svg class="fi" width="16" height="16"><use href="#i-dll"/></svg><span class="fn"><span class="r" style="letter-spacing:0.713px">f</span><span class="r" style="letter-spacing:-0.666px">0010144</span><span class="r" style="letter-spacing:-0.744px">_kd_</span><span class="r" style="letter-spacing:-0.63px">0</span><span class="r" style="letter-spacing:-1.643px">C_</span><span class="r" style="letter-spacing:-0.661px">8086</span><span class="r" style="letter-spacing:0.178px">.dll</span></span><span class="fd" style="letter-spacing:-0.389px">30/09/2016 10:57</span><span class="ft" style="letter-spacing:-0.138px">Application extens...</span><span class="fs" style="letter-spacing:-0.821px;margin-right:-0.821px">29 KB</span></div>
<div class="row" style="top:646px"><svg class="fi" width="16" height="16"><use href="#i-blank"/></svg><span class="fn"><span class="r" style="letter-spacing:0.79px">f</span><span class="r" style="letter-spacing:-0.655px">0010204</span><span class="r" style="letter-spacing:0.279px">.dbf</span></span><span class="fd" style="letter-spacing:-0.389px">30/09/2016 10:57</span><span class="ft" style="letter-spacing:-0.584px">DBF File</span><span class="fs" style="letter-spacing:-0.821px;margin-right:-0.821px">10 KB</span></div>
<div class="row" style="top:667px"><svg class="fi" width="16" height="16"><use href="#i-dll"/></svg><span class="fn"><span class="r" style="letter-spacing:0.79px">f</span><span class="r" style="letter-spacing:-0.655px">0010224</span><span class="r" style="letter-spacing:-0.022px">_kdstub.dll</span></span><span class="fd" style="letter-spacing:-0.389px">30/09/2016 10:57</span><span class="ft" style="letter-spacing:-0.138px">Application extens...</span><span class="fs" style="letter-spacing:-0.821px;margin-right:-0.821px">14 KB</span></div>
<div class="row" style="top:688px"><svg class="fi" width="16" height="16"><use href="#i-blank"/></svg><span class="fn"><span class="r" style="letter-spacing:0.79px">f</span><span class="r" style="letter-spacing:-0.655px">0010254</span><span class="r" style="letter-spacing:0.279px">.dbf</span></span><span class="fd" style="letter-spacing:-0.389px">30/09/2016 10:57</span><span class="ft" style="letter-spacing:-0.584px">DBF File</span><span class="fs" style="letter-spacing:-0.821px;margin-right:-0.821px">61 KB</span></div>
<div class="row" style="top:709px"><svg class="fi" width="16" height="16"><use href="#i-exe"/></svg><span class="fn"><span class="r" style="letter-spacing:0.79px">f</span><span class="r" style="letter-spacing:-0.655px">0010376</span><span class="r" style="letter-spacing:0.054px">_bootmgr</span></span><span class="fd" style="letter-spacing:-0.389px">30/09/2016 10:57</span><span class="ft" style="letter-spacing:0.116px">Application</span><span class="fs" style="letter-spacing:-0.821px;margin-right:-0.821px">68 KB</span></div>
<div class="row" style="top:730px"><svg class="fi" width="16" height="16"><use href="#i-blank"/></svg><span class="fn"><span class="r" style="letter-spacing:0.79px">f</span><span class="r" style="letter-spacing:-0.655px">0010514</span><span class="r" style="letter-spacing:0.279px">.dbf</span></span><span class="fd" style="letter-spacing:-0.389px">30/09/2016 10:57</span><span class="ft" style="letter-spacing:-0.584px">DBF File</span><span class="fs" style="letter-spacing:-0.854px;margin-right:-0.854px">7 KB</span></div>
</div></div>

<!-- RIGHT SCROLLBAR -->
<div class="a" style="left:1350px;top:174px;width:16px;height:570px;background:#f0f0f0"></div>
<div class="a" style="left:1350px;top:191px;width:15px;height:22px;background:#cdcdcd"></div>
<svg class="a" style="left:1350px;top:174px" width="16" height="17"><path d="M4.600 11l3-3.400l3 3.400" fill="none" stroke="#505050" stroke-width="2.100"/></svg>
<svg class="a" style="left:1350px;top:727px" width="16" height="17"><path d="M4.400 6.800l3.100 3.700l3.100-3.700" fill="none" stroke="#505050" stroke-width="2.100"/></svg>

<!-- STATUS BAR -->
<div class="a" style="left:0;top:744px;width:1366px;height:24px;background:#fff"></div>
<div class="a" style="left:0;top:766px;width:1366px;height:1px;background:#f8f8f8"></div><div class="a" style="left:0;top:767px;width:1366px;height:1px;background:#f0f0f0"></div>
<div class="t" style="left:14px;top:749px;color:#333;letter-spacing:-0.203px">635 items</div>
<div class="a" style="left:1318px;top:744px;width:20px;height:21px;background:#c6ebfa;border:1px solid #3f93ad"></div>
<svg class="a" style="left:1318px;top:744px" width="48" height="24">
 <path d="M4.900 6h3.400v3.400h-3.400zM4.900 10h3.400v3.400h-3.400zM4.900 13.900h3.400v3.400h-3.400z" fill="#fff" stroke="#8a9499" stroke-width=".8"/>
 <path d="M6.100 7.200h1v1h-1zM6.100 11.200h1v1h-1zM6.100 15.100h1v1h-1z" fill="#333"/>
 <path d="M10.200 7.600h3.600M16 7.600h3.800M10.200 11.600h3.600M16 11.600h3.800M10.200 15.500h3.600M16 15.500h3.800" stroke="#5d6f78" stroke-width="1"/>
 <rect x="26.700" y="5.600" width="12.600" height="9.600" fill="#fff" stroke="#8d8d8d"/><rect x="28.300" y="7.200" width="9.400" height="6.400" fill="#9ccbee"/><path d="M28.300 13.600v-3.200q2-1.200 4 0.400t5.400 0v2.800z" fill="#3a5f7e"/>
</svg>
</div></body></html>
